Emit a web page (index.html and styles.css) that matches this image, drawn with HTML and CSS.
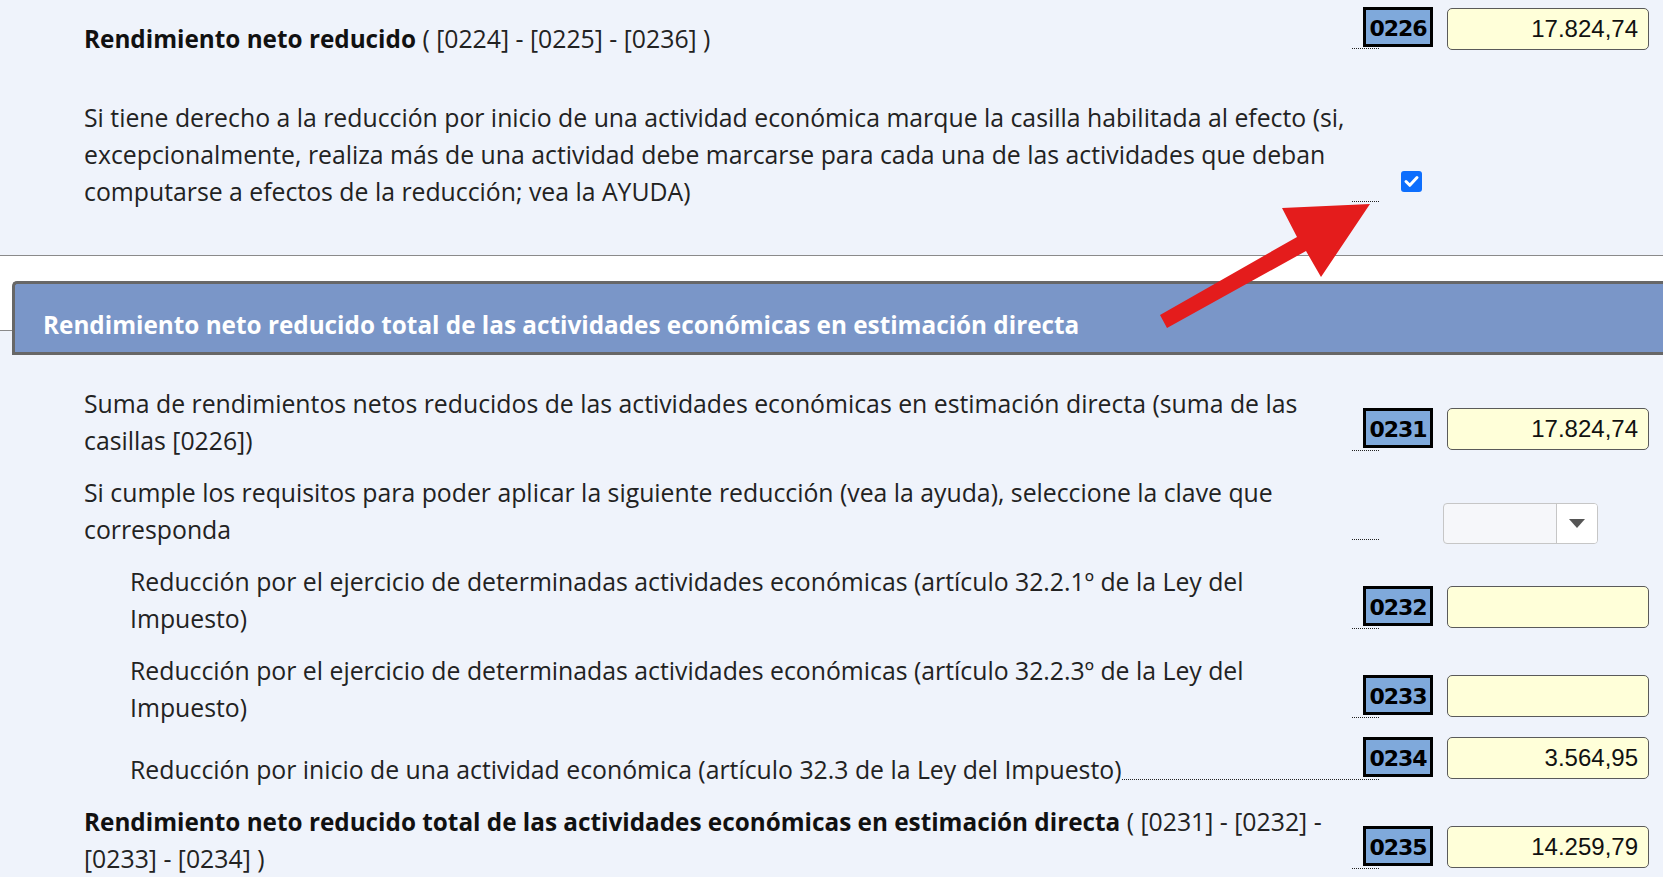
FILE: index.html
```html
<!DOCTYPE html>
<html lang="es">
<head>
<meta charset="utf-8">
<title>Rendimiento neto reducido</title>
<link rel="stylesheet" href="styles.css">
</head>
<body>
<div class="page">
  <section class="block block-top">
    <div class="row row-first">
      <div class="label"><b>Rendimiento neto reducido</b> ( [0224] - [0225] - [0236] )</div>
      <span class="leader"></span>
      <div class="slot">
        <span class="code">0226</span>
        <span class="amount">17.824,74</span>
      </div>
    </div>
    <div class="row row-check">
      <div class="label">Si tiene derecho a la reducción por inicio de una actividad económica marque la casilla habilitada al efecto (si, excepcionalmente, realiza más de una actividad debe marcarse para cada una de las actividades que deban computarse a efectos de la reducción; vea la AYUDA)</div>
      <span class="leader"></span>
      <div class="slot">
        <span class="check"><svg width="21" height="21" viewBox="0 0 21 21"><path d="M5 10.5 L8.8 14.3 L16 6.6" fill="none" stroke="#fff" stroke-width="3" stroke-linecap="round" stroke-linejoin="round"/></svg></span>
      </div>
    </div>
  </section>
  <div class="spacer"></div>
  <h2 class="band">Rendimiento neto reducido total de las actividades económicas en estimación directa</h2>
  <section class="block block-bottom">
    <div class="row">
      <div class="label">Suma de rendimientos netos reducidos de las actividades económicas en estimación directa (suma de las casillas [0226])</div>
      <span class="leader"></span>
      <div class="slot">
        <span class="code">0231</span>
        <span class="amount">17.824,74</span>
      </div>
    </div>
    <div class="row">
      <div class="label">Si cumple los requisitos para poder aplicar la siguiente reducción (vea la ayuda), seleccione la clave que corresponda</div>
      <span class="leader"></span>
      <div class="slot">
        <div class="select"><span class="select-value"></span><span class="select-btn"><span class="caret"></span></span></div>
      </div>
    </div>
    <div class="row indent">
      <div class="label">Reducción por el ejercicio de determinadas actividades económicas (artículo 32.2.1º de la Ley del Impuesto)</div>
      <span class="leader"></span>
      <div class="slot">
        <span class="code">0232</span>
        <span class="amount"></span>
      </div>
    </div>
    <div class="row indent">
      <div class="label">Reducción por el ejercicio de determinadas actividades económicas (artículo 32.2.3º de la Ley del Impuesto)</div>
      <span class="leader"></span>
      <div class="slot">
        <span class="code">0233</span>
        <span class="amount"></span>
      </div>
    </div>
    <div class="row indent row-fill">
      <div class="label">Reducción por inicio de una actividad económica (artículo 32.3 de la Ley del Impuesto)</div>
      <span class="leader"></span>
      <div class="slot">
        <span class="code">0234</span>
        <span class="amount">3.564,95</span>
      </div>
    </div>
    <div class="row">
      <div class="label"><b>Rendimiento neto reducido total de las actividades económicas en estimación directa</b> ( [0231] - [0232] - [0233] - [0234] )</div>
      <span class="leader"></span>
      <div class="slot">
        <span class="code">0235</span>
        <span class="amount">14.259,79</span>
      </div>
    </div>
  </section>
  <svg class="arrow" width="1663" height="877" viewBox="0 0 1663 877">
    <polygon points="1160,315 1297,237 1282,208 1370,204 1321,277 1306,251 1167,328" fill="#e41c1c"/>
  </svg>
</div>
</body>
</html>
```
FILE: styles.css
```css
html, body {
  margin: 0;
  padding: 0;
}
body {
  background: #ffffff;
  font-family: "Open Sans", Lato, sans-serif;
  font-size: 24.8px;
  color: #222;
  overflow: hidden;
}
.page {
  position: relative;
  width: 1663px;
  height: 877px;
  overflow: hidden;
}
.block {
  background: #eff3fb;
}
.block-top {
  padding: 7px 0 45px;
  border-bottom: 1px solid #8a8a8a;
}
.block-bottom {
  border-top: 1px solid #8a8a8a;
  padding-top: 50px;
  display: flex;
  flex-direction: column;
  gap: 11px;
  height: 600px;
}
.spacer {
  height: 25px;
}
.band {
  position: relative;
  z-index: 1;
  margin: 0 0 -25px 12px;
  border: 3px solid #676767;
  border-right: 0;
  border-top-left-radius: 5px;
  background: #7a96c8;
  color: #fff;
  font-size: 24.3px;
  font-weight: 700;
  line-height: 37px;
  padding: 22px 0 9px 28px;
}
.row {
  display: flex;
  align-items: flex-end;
  padding: 0 14px 0 84px;
}
.row.indent {
  padding-left: 130px;
}
.row-check {
  margin-top: 38px;
}
.label {
  flex: 1 1 auto;
  line-height: 37px;
  padding-top: 4px;
}
.row-fill .label {
  flex: 0 1 auto;
}
.label b {
  color: #111;
  font-size: 24.3px;
}
.leader {
  flex: 0 0 27px;
  border-bottom: 1px dotted #222;
  margin-bottom: 8px;
}
.row-fill .leader {
  flex: 1 0 27px;
}
.slot {
  flex: 0 0 270px;
  display: flex;
  align-items: flex-end;
}
.code {
  box-sizing: border-box;
  width: 70px;
  height: 40px;
  margin: 0 0 11px -16px;
  padding-top: 3px;
  border: 3px solid #000;
  background: #7fa9db;
  font-family: "DejaVu Sans", sans-serif;
  font-weight: 700;
  font-size: 22px;
  letter-spacing: -1px;
  color: #000;
  display: flex;
  align-items: center;
  justify-content: center;
}
.amount {
  box-sizing: border-box;
  width: 202px;
  height: 42px;
  margin: 0 0 9px 14px;
  padding-right: 10px;
  border: 1px solid #5a5a5a;
  border-radius: 5px;
  background: #ffffd9;
  font-family: "Liberation Sans", Arial, sans-serif;
  font-size: 24px;
  line-height: 40px;
  text-align: right;
  color: #111;
}
.row-first .code {
  margin-bottom: 10px;
}
.row-first .amount {
  margin-bottom: 7px;
}
.check {
  display: block;
  width: 21px;
  height: 21px;
  margin: 0 0 18px 22px;
  border-radius: 3px;
  background: #0d6efd;
}
.check svg {
  display: block;
}
.select {
  box-sizing: border-box;
  display: flex;
  width: 155px;
  height: 41px;
  margin: 0 0 4px 64px;
  border: 1px solid #c6c6c6;
  border-radius: 4px;
  background: #f6f7fa;
  overflow: hidden;
}
.select-value {
  flex: 1;
}
.select-btn {
  width: 40px;
  border-left: 1px solid #c6c6c6;
  background: #fff;
  display: flex;
  align-items: center;
  justify-content: center;
}
.caret {
  width: 0;
  height: 0;
  border-left: 8px solid transparent;
  border-right: 8px solid transparent;
  border-top: 9px solid #555;
}
.arrow {
  position: absolute;
  left: 0;
  top: 0;
  z-index: 2;
  pointer-events: none;
}
```
